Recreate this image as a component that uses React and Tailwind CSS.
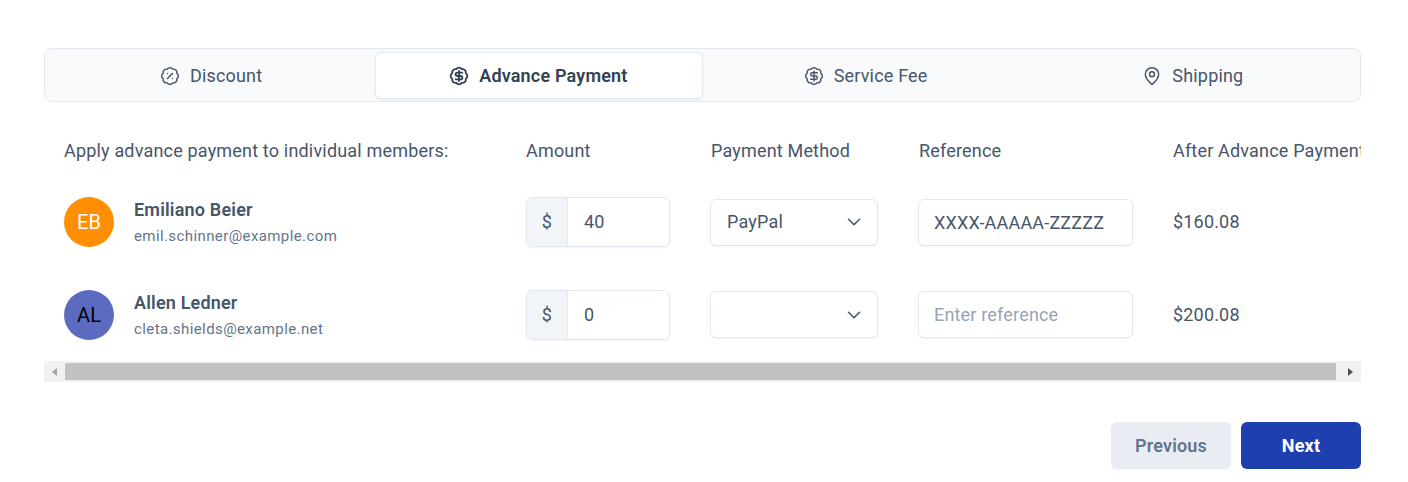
import { BadgeDollarSign, BadgePercent, ChevronDown, MapPin } from "lucide-react";

const tabs = [
  { label: "Discount", icon: BadgePercent },
  { label: "Advance Payment", icon: BadgeDollarSign, active: true },
  { label: "Service Fee", icon: BadgeDollarSign },
  { label: "Shipping", icon: MapPin },
];

const members = [
  {
    initials: "EB",
    name: "Emiliano Beier",
    email: "emil.schinner@example.com",
    avatar: "bg-[#ff8f00] text-white",
    amount: "40",
    method: "PayPal",
    reference: "XXXX-AAAAA-ZZZZZ",
    after: "$160.08",
  },
  {
    initials: "AL",
    name: "Allen Ledner",
    email: "cleta.shields@example.net",
    avatar: "bg-[#5c6bc0] text-black",
    amount: "0",
    method: "",
    reference: "",
    after: "$200.08",
  },
];

const cols = "grid grid-cols-[462px_185px_208px_254px_212px] w-[1321px]";

function MemberRow({ m }) {
  return (
    <div className={cols + " h-[92.5px] items-center"}>
      <div className="flex items-center gap-5 pl-5">
        <div className={"flex h-[50px] w-[50px] items-center justify-center rounded-full text-xl " + m.avatar}>
          {m.initials}
        </div>
        <div>
          <p className="leading-6 font-semibold text-[#475569]">{m.name}</p>
          <p className="mt-1 text-[15px] leading-5 tracking-[0.4px] text-[#64748b]">{m.email}</p>
        </div>
      </div>

      <div className="pl-5">
        <div className="flex h-[50px] w-[144px] overflow-hidden rounded-md border border-[#e2e8f0] shadow-xs">
          <span className="flex w-[41px] items-center justify-center border-r border-[#e2e8f0] bg-[#f1f5f9]">$</span>
          <input readOnly value={m.amount} className="w-[100px] bg-white px-4 tracking-[0.18px] outline-none" />
        </div>
      </div>

      <div className="pl-[19px]">
        <div className="flex h-[47px] w-[168px] items-center justify-between rounded-md border border-[#e2e8f0] bg-white pr-3 pl-4 shadow-xs">
          <span>{m.method}</span>
          <ChevronDown className="h-[22px] w-[22px]" strokeWidth={1.75} />
        </div>
      </div>

      <div className="pl-[19px]">
        <input
          readOnly
          value={m.reference}
          placeholder="Enter reference"
          className="h-[47px] w-[215px] rounded-md border border-[#e2e8f0] bg-white px-[15px] tracking-[0.18px] shadow-xs outline-none placeholder:text-[#94a3b8]"
        />
      </div>

      <div className="pl-5">{m.after}</div>
    </div>
  );
}

export default function App() {
  return (
    <div className="min-h-[482px] bg-white pt-12 pr-[47px] pl-11 font-['Roboto',sans-serif] text-lg tracking-[0.18px] text-[#475569]">
      {/* Tabs */}
      <div className="grid h-[54px] grid-cols-4 rounded-lg border border-[#e2e8f0] bg-[#f8fafc] px-[3px] pt-[3px] pb-[2px]">
        {tabs.map((t) => (
          <button
            key={t.label}
            className={
              "flex items-center justify-center gap-2.5 rounded-md pr-[1px] " +
              (t.active ? "border border-[#e2e8f0] bg-white font-semibold text-[#334155] shadow-xs" : "")
            }
          >
            <t.icon className="h-5 w-5" strokeWidth={t.active ? 2.25 : 1.75} />
            {t.label}
          </button>
        ))}
      </div>

      {/* Members table, wider than its box */}
      <div className="mt-6 overflow-hidden">
        <div className={cols + " h-[50.1px] items-center"}>
          <div className="pl-5">Apply advance payment to individual members:</div>
          <div className="pl-5">Amount</div>
          <div className="pl-5">Payment Method</div>
          <div className="pl-5">Reference</div>
          <div className="pl-5 whitespace-nowrap">After Advance Payment</div>
        </div>
        {members.map((m) => (
          <MemberRow key={m.initials} m={m} />
        ))}
      </div>

      {/* Horizontal scrollbar */}
      <div className="flex h-[21px] items-center bg-[#f1f1f1] py-[2px]">
        <div className="flex w-[21px] justify-center">
          <div className="h-0 w-0 border-y-[4.5px] border-r-[5px] border-y-transparent border-r-[#a3a3a3]" />
        </div>
        <div className="h-full w-[1271px] bg-[#c1c1c1]" />
        <div className="flex flex-1 justify-end pr-2">
          <div className="h-0 w-0 border-y-[4.5px] border-l-[5px] border-y-transparent border-l-[#505050]" />
        </div>
      </div>

      {/* Footer */}
      <div className="mt-[40px] flex justify-end gap-2.5">
        <button className="h-[47px] w-[120px] rounded-md bg-[#e9edf3] font-semibold text-[#64748b] shadow-xs">Previous</button>
        <button className="h-[47px] w-[120px] rounded-md bg-[#1e40af] font-bold text-white">Next</button>
      </div>
    </div>
  );
}
